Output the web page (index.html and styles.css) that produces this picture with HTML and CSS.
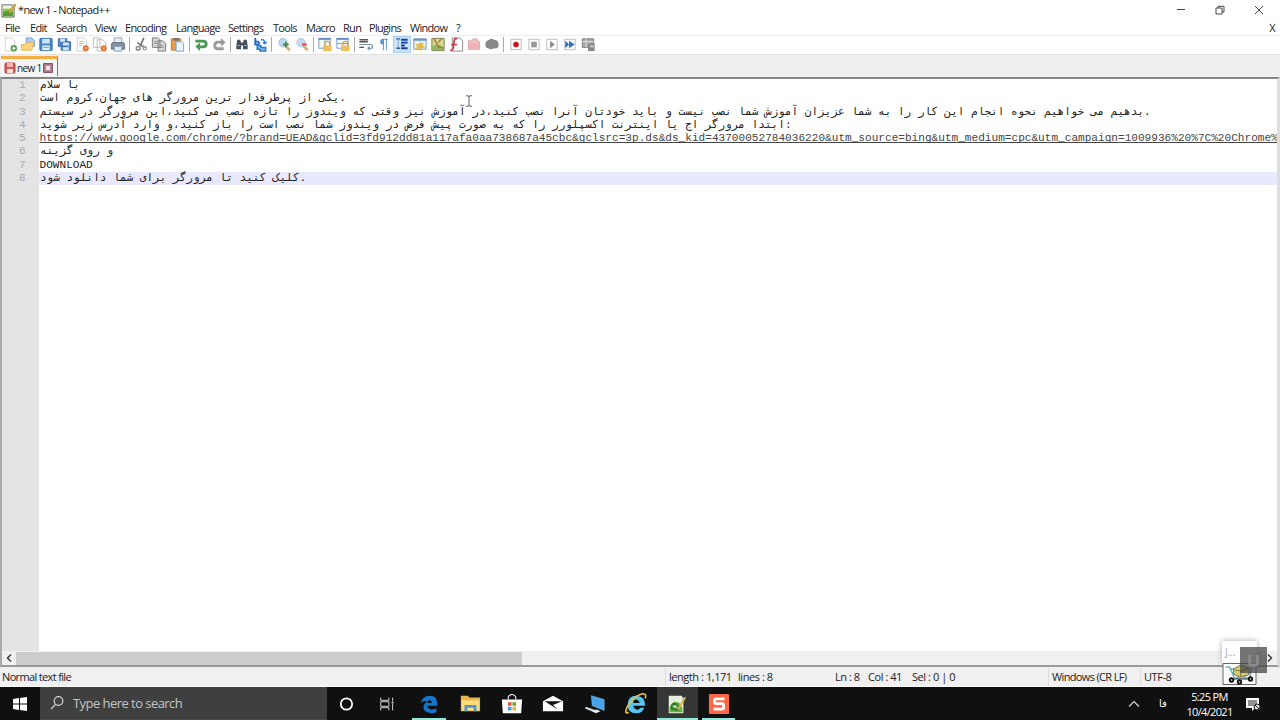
FILE: index.html
```html
<!DOCTYPE html>
<html lang="en">
<head>
<meta charset="utf-8">
<title>*new 1 - Notepad++</title>
<link rel="stylesheet" href="styles.css">
</head>
<body>
<div class="window">
  <header class="titlebar">
    <svg class="app-icon" viewBox="0 0 16 16"><path d="M1 2h11l2 2v11H1z" fill="#f3f5ee" stroke="#60655c"/><path d="M2 6h11v8H2z" fill="#8bcb3c"/><path d="M2 10q5-3 11 0v4H2z" fill="#4da432"/><path d="M8 10l6-9 2 1-6 9-2 1z" fill="#e8ba3b" stroke="#6a583a" stroke-width=".5"/></svg>
    <span class="title">*new 1 - Notepad++</span>
    <div class="controls">
      <svg viewBox="0 0 12 12"><path d="M2 5.500h8"/></svg>
      <svg viewBox="0 0 12 12"><path d="M2 4h6v6H2zM4 4V2.300h6V8H8"/></svg>
      <svg viewBox="0 0 12 12"><path d="M2 2l8 8M10 2l-8 8"/></svg>
    </div>
  </header>
  <nav class="menu">
    <span class="w25">File</span><span class="w26">Edit</span><span class="w39">Search</span><span class="w30">View</span><span class="w51">Encoding</span><span class="w52">Language</span><span class="w45">Settings</span><span class="w33">Tools</span><span class="w37">Macro</span><span class="w26">Run</span><span class="w41">Plugins</span><span class="w46">Window</span><span>?</span><span class="doc-close">X</span>
  </nav>
  <div class="toolbar">
    <svg viewBox="0 0 18 18"><path d="M4 2h7l3 3v11H4z" fill="#fff" stroke="#d0d0d0"/><circle cx="13" cy="13" r="3.400" fill="#4d9a45"/><path d="M13 11v4M11 13h4" stroke="#fff" stroke-width="1.200"/></svg>
    <svg viewBox="0 0 18 18"><path d="M7 2h6l3 3v6H7z" fill="#a9c9f0" stroke="#7da7dc"/><path d="M2 9h4l2-2h7l-2 8H2z" fill="#f9d57c" stroke="#e1b657"/></svg>
    <svg viewBox="0 0 18 18"><rect x="2.500" y="2.500" width="13" height="13" rx="1" fill="#4d85c4" stroke="#356fae"/><path d="M5 3h8v5H5z" fill="#c8e5f5"/><path d="M5 10h8v5H5z" fill="#d9eeee"/><path d="M6 12h6" stroke="#68a29e"/></svg>
    <svg viewBox="0 0 18 18"><path d="M3 3h9v8H3zM6 6h10v9H6z" fill="#5589ca" stroke="#3969ac"/><path d="M5 3h5v3H5zM8 7h6v3H8zM8 12h6v3H8z" fill="#d2e6f4"/></svg>
    <svg viewBox="0 0 18 18"><path d="M4 2h7l3 3v11H4z" fill="#fff" stroke="#ccc"/><path d="M6 6h5M6 8h5M6 10h3" stroke="#b9b9b9"/><circle cx="13" cy="13" r="3.200" fill="#df7436"/><path d="M12 12l2 2m0-2l-2 2" stroke="#f8d1af"/></svg>
    <svg viewBox="0 0 18 18"><path d="M2 2h7v10H2zM6 4h6l3 3v9H6z" fill="#fff" stroke="#bbb"/><circle cx="13" cy="13" r="3.200" fill="#df7436"/><path d="M12 12l2 2m0-2l-2 2" stroke="#f8d1af"/></svg>
    <svg viewBox="0 0 18 18"><path d="M5 2h8v6H5z" fill="#e3f0fc" stroke="#8ba1bd"/><path d="M3 7h12l1 2v5H2V9z" fill="#89919d" stroke="#67717e"/><path d="M5 11h8v5H5z" fill="#d9eafa" stroke="#829dba"/></svg>
    <i class="sep"></i>
    <svg viewBox="0 0 18 18"><path d="M12 2L8 11M5 7l8 5" fill="none" stroke="#777" stroke-width="1.800"/><circle cx="6" cy="13" r="2" fill="none" stroke="#888" stroke-width="1.600"/><circle cx="13" cy="13" r="1.700" fill="none" stroke="#999" stroke-width="1.500"/></svg>
    <svg viewBox="0 0 18 18"><path d="M2 2h6l2 2v8H2zM8 5h5l3 3v8H8z" fill="#d6d6d6" stroke="#777"/><path d="M4 6h3M4 8h3M10 10h3M10 12h4" stroke="#888"/></svg>
    <svg viewBox="0 0 18 18"><path d="M3 3h10v12H3z" fill="#e8a14b" stroke="#b77d37"/><path d="M5 2h6v3H5z" fill="#777"/><path d="M8 6h6l2 2v8H8z" fill="#edf5ff" stroke="#799fce"/></svg>
    <i class="sep"></i>
    <svg viewBox="0 0 18 18"><path d="M3 4h8q5 0 5 4.500T11 13H8v3l-5-5 5-4v3h3q2 0 2-1.500T11 7H3z" fill="#489b51"/></svg>
    <svg viewBox="0 0 18 18"><path d="M14 15H8q-5 0-5-5t5-5h3V2l5 5-5 4V8H8q-2 0-2 2t2 2h6z" fill="#9b9b9b"/></svg>
    <i class="sep"></i>
    <svg viewBox="0 0 18 18"><path d="M4 4h3l1 3h2l1-3h3l1 6v4h-5v-4H8v4H3v-4z" fill="#454e5d"/><path d="M4 10h3m4 0h3" stroke="#a2acbc"/></svg>
    <svg viewBox="0 0 18 18"><path d="M4 2v7h3q2-1 0-3H4" fill="none" stroke="#2768bc" stroke-width="2"/><path d="M10 4q4-1 4 4l-2-1m2 1l2-2" fill="none" stroke="#2879c4" stroke-width="1.500"/><path d="M6 10h4v2h5v4H9v-2H6z" fill="#73b3e9" stroke="#2879c4" stroke-width="1.500"/></svg>
    <i class="sep"></i>
    <svg viewBox="0 0 18 18"><path d="M10 10l5 5" stroke="#d5ad83" stroke-width="3"/><circle cx="8" cy="7" r="4.400" fill="#b9d9f5" stroke="#9ebad3"/><path d="M11 6v6M8 9h6" stroke="#478a43" stroke-width="2"/></svg>
    <svg viewBox="0 0 18 18"><path d="M10 10l5 5" stroke="#d5ad83" stroke-width="3"/><circle cx="8" cy="7" r="4.400" fill="#c6dcf4" stroke="#a8c4df"/><path d="M9 9h5" stroke="#d84a4a" stroke-width="2.200"/></svg>
    <i class="sep"></i>
    <svg viewBox="0 0 18 18"><path d="M2.500 3h12v10h-12zM9 3v10" fill="#f5fbff" stroke="#7498bf"/><path d="M2 3h13" stroke="#628dbd" stroke-width="2"/><path d="M9 10V7q3-3 5 0v3" fill="none" stroke="#d8a644" stroke-width="1.500"/><path d="M7 10h9v6H7z" fill="#ecc05d"/></svg>
    <svg viewBox="0 0 18 18"><path d="M2.500 3h12v10h-12zM3 8h12" fill="#f5fbff" stroke="#7498bf"/><path d="M2 3h13" stroke="#628dbd" stroke-width="2"/><path d="M9 10V7q3-3 5 0v3" fill="none" stroke="#d8a644" stroke-width="1.500"/><path d="M7 10h9v6H7z" fill="#ecc05d"/></svg>
    <i class="sep"></i>
    <svg viewBox="0 0 18 18"><path d="M2 4h9M2 6h9M2 12h5" stroke="#555" stroke-width="1.500"/><path d="M2 9h12q2 0 2 2t-2 2h-3m2-2l-2 2 2 2" fill="none" stroke="#7899b6" stroke-width="1.300"/></svg>
    <svg viewBox="0 0 18 18"><path d="M13 3H8Q5 3 5 6t3 3v6h1V4h2v11h1V4h1z" fill="#5795d2"/></svg>
    <svg class="active" viewBox="0 0 18 18"><path d="M3 3h4M3 13h4" stroke="#355fa9" stroke-width="1.500"/><path d="M5 4v9" stroke="#355fa9" stroke-dasharray="1 1"/><path d="M8 4h7M8 7h7M8 10h4M8 13h7" stroke="#173ca0" stroke-width="2"/></svg>
    <svg viewBox="0 0 18 18"><path d="M2.500 3h13v11h-13z" fill="#e7f3ff" stroke="#7596bd"/><path d="M2 4h14" stroke="#6794c5" stroke-width="2"/><path d="M9 5l1 3 3-1-1 3 3 2-4 1-1 3-2-3-4 1 2-3-2-3 4 1z" fill="#edb840"/></svg>
    <svg viewBox="0 0 18 18"><path d="M2.500 2.500h13v13h-13z" fill="#d2dd87" stroke="#777b59"/><path d="M3 11l5-3 7 4v3H3z" fill="#92b768"/><path d="M5 3l5 10M13 3L9 7m0 4l6 2" fill="none" stroke="#b97945" stroke-width="1.500"/></svg>
    <svg viewBox="0 0 18 18"><path d="M5 2h8l3 3v11H5z" fill="#fff" stroke="#888"/><path d="M10 3Q7 2 7 6l-1 7q-1 3-3 2M4 9h6" fill="none" stroke="#d33843" stroke-width="1.800"/></svg>
    <svg viewBox="0 0 18 18"><path d="M3 5h4l1-2h4l1 3h2v8H3z" fill="#f3c0c0" stroke="#dfa1a5"/><path d="M3 8h12v6H3z" fill="#efb1b5"/></svg>
    <svg viewBox="0 0 18 18"><path d="M2 9q0-4 4-5 2-2 5 0 5 0 5 5t-5 4q-3 2-6 0-3 0-3-4" fill="#888"/></svg>
    <i class="sep"></i>
    <svg viewBox="0 0 18 18"><path d="M3.500 3.500h11v11h-11z" fill="#fff" stroke="#b6b9bd"/><circle cx="9" cy="9" r="3" fill="#c91920"/></svg>
    <svg viewBox="0 0 18 18"><path d="M3.500 3.500h11v11h-11z" fill="#fff" stroke="#bbb"/><path d="M6 6h6v6H6z" fill="#999"/></svg>
    <svg viewBox="0 0 18 18"><path d="M3.500 3.500h11v11h-11z" fill="#fff" stroke="#bbb"/><path d="M7 5l5 4-5 4z" fill="#888"/></svg>
    <svg viewBox="0 0 18 18"><path d="M3.500 3.500h11v11h-11z" fill="#fff" stroke="#aebccd"/><path d="M4 5l4 4-4 4zM8 5l6 4-6 4z" fill="#326fbd"/></svg>
    <svg viewBox="0 0 18 18"><path d="M3 3h12v9H3z" fill="#aaa" stroke="#777"/><path d="M3 6h12M7 3v9" stroke="#e0e0e0"/><path d="M9 8h7v8H9z" fill="#888"/><path d="M11 10h4v2h-4z" fill="#ccc"/></svg>
  </div>
  <div class="tabs">
    <div class="tab">
      <svg viewBox="0 0 12 12"><rect x="1" y="1" width="10" height="10" rx="1" fill="#dc5552" stroke="#b7403f"/><path d="M3 1h6v4H3z" fill="#f1b5ae"/><path d="M3 7h6v4H3z" fill="#fae1d7"/></svg>
      <span>new 1</span>
      <svg viewBox="0 0 12 12"><path d="M1.500 1.500h9v9h-9z" fill="#b2768a" stroke="#83576d"/><path d="M4 4l4 4m0-4L4 8" stroke="#fff" stroke-width="1.700"/></svg>
    </div>
  </div>
  <main class="editor">
    <div class="code">
      <div class="line"><span class="num">1</span><span class="fa">با سلام</span></div>
      <div class="line"><span class="num">2</span><span class="fa">یکی از پرطرفدار ترین مرورگر های جهان،کروم است.</span></div>
      <div class="line"><span class="num">3</span><span class="fa">بدهیم می خواهیم نحوه انجام این کار را به شما عزیزان آموزش شما نصب نیست و باید خودتان آنرا نصب کنید،در آموزش نیز وقتی که ویندوز را تازه نصب می کنید،این مرورگر در سیستم.</span></div>
      <div class="line"><span class="num">4</span><span class="fa">ابتدا مرورگر اج یا اینترنت اکسپلورر را که به صورت پیش فرض در ویندوز شما نصب است را باز کنید،و وارد آدرس زیر شوید:</span></div>
      <div class="line"><span class="num">5</span><span class="url">https://www.google.com/chrome/?brand=UEAD&amp;gclid=3fd912dd81a117afa0aa738687a45cbc&amp;gclsrc=3p.ds&amp;ds_kid=43700052784036220&amp;utm_source=bing&amp;utm_medium=cpc&amp;utm_campaign=1009936%20%7C%20Chrome%</span></div>
      <div class="line"><span class="num">6</span><span class="fa">و روی گزینه</span></div>
      <div class="line"><span class="num">7</span><span class="latin">DOWNLOAD</span></div>
      <div class="line current"><span class="num">8</span><span class="fa">کلیک کنید تا مرورگر برای شما دانلود شود.</span></div>
    </div>
    <div class="hscroll">
      <svg viewBox="0 0 14 14"><path d="M9 3.500L5.500 7 9 10.500"/></svg>
      <div class="thumb"></div>
      <svg class="right" viewBox="0 0 14 14"><path d="M5 3.500L8.500 7 5 10.500"/></svg>
    </div>
    <svg class="ibeam" viewBox="0 0 8 12"><path d="M1 .8h2l1 .7 1-.7h2M4 1.500v9M1 11.200h2l1-.7 1 .7h2"/></svg>
  </main>
  <footer class="status">
    <span class="kind">Normal text file</span><span class="length">length : 1,171</span><span class="lines">lines : 8</span><span class="ln">Ln : 8</span><span class="col">Col : 41</span><span class="sel">Sel : 0 | 0</span><span class="eol">Windows (CR LF)</span><span class="enc">UTF-8</span>
  </footer>
  <div class="taskbar">
    <div class="start"><svg viewBox="0 0 14 14"><path d="M0 2l6-1v5.500H0zM7 .9L14 0v6.500H7zM0 7.500h6V13l-6-1zM7 7.500h7V14l-7-1z" fill="#fff"/></svg></div>
    <div class="search"><svg viewBox="0 0 16 16"><circle cx="9.500" cy="6" r="4.300"/><path d="M6.500 9.300L2 14"/></svg><span>Type here to search</span></div>
    <div class="apps">
      <div><svg viewBox="0 0 24 24"><circle cx="12.500" cy="12" r="6.200" fill="none" stroke="#fff" stroke-width="1.900"/></svg></div>
      <div><svg viewBox="0 0 24 24"><path d="M4 5v3h9V5M4 19v-3h9v3M4 9.500h9v5H4zM17 5v4m0 3v7" fill="none" stroke="#ddd"/><path d="M16 9.500h2v2h-2z" fill="#ddd"/></svg></div>
      <div class="open"><svg viewBox="0 0 24 24"><path d="M3 11Q5 3 13 3q8 0 8 9v2H10q1 4 5 4 3 0 5-1v4q-2 1-6 1-9-1-8-8 1-3 4-5-5-1-7 2m7 0h5q0-3-2-3-3 0-3 3" fill="#1675ce" fill-rule="evenodd"/></svg></div>
      <div><svg viewBox="0 0 24 24"><path d="M2 3h8l1 2h12v15H2z" fill="#e9b64e"/><path d="M3 8h19v11H3z" fill="#ffdc7c"/><path d="M6 20v-7h13v7h-3v-4H9v4z" fill="#4e99c9"/></svg></div>
      <div><svg viewBox="0 0 24 24"><path d="M8 7V4q4-5 8 0v3" fill="none" stroke="#ddd" stroke-width="1.300"/><path d="M1 7h22l-1 15H2z" fill="#fff"/><path d="M7.500 10h4v4h-4z" fill="#e45b3b"/><path d="M12.500 10h4v4h-4z" fill="#76a839"/><path d="M7.500 15h4v4h-4z" fill="#3b9cda"/><path d="M12.500 15h4v4h-4z" fill="#edb33a"/></svg></div>
      <div><svg viewBox="0 0 24 24"><path d="M1 9l11-6 11 6v11H1z" fill="#fff"/><path d="M3 9h19l-10 4 5 5z" fill="#111"/></svg></div>
      <div><svg viewBox="0 0 24 24"><path d="M8 3l14 4v12L9 14z" fill="#46a3e8" stroke="#8acbfb" stroke-width=".5"/><path d="M2 15l12 4-3 2-10-4z" fill="#c8d7e4"/><path d="M9 20l5-2 4 2-5 2z" fill="#eee"/></svg></div>
      <div><svg viewBox="0 0 24 24"><path d="M3 13q0-10 9-10 10 0 10 11H9q1 5 6 4l2-2h4q-2 6-9 6-9 0-9-9m6-2h7q-1-4-4-4t-3 4" fill="#59c6f2" fill-rule="evenodd"/><path d="M4 21Q-1 24 2 16 8 4 18 1q6-1 4 5" fill="none" stroke="#efc23c" stroke-width="1.700"/></svg></div>
      <div class="open focused"><svg viewBox="0 0 24 24"><path d="M3 3h14l2 3v16H3z" fill="#e6efdf"/><path d="M4 15q4-7 8-5 5 0 6 9v2H4z" fill="#64b52e"/><path d="M6 12q5-4 9 4l-2 4-8-2z" fill="#2e7939"/><path d="M7 14l4-1 2 4-5-1z" fill="#bddb87"/><path d="M13 16l7-12 2 1-7 12-3 2z" fill="#ddb24e"/></svg></div>
      <div class="open"><svg viewBox="0 0 24 24"><rect x="1" y="1" width="22" height="22" rx="1.500" fill="#ff6847"/><path d="M18 6.500H9Q7 6.500 7 8.500v1q0 2 2 2h6q2 0 2 2v2q0 2-2 2H6" fill="none" stroke="#fff" stroke-width="3"/></svg></div>
    </div>
    <div class="tray">
      <svg class="chev" viewBox="0 0 12 12"><path d="M1 8.500l5-5 5 5"/></svg>
      <span class="lang">فا</span>
      <div class="clock"><span>5:25 PM</span><span>10/4/2021</span></div>
      <svg class="notice" viewBox="0 0 16 16"><path d="M1 2h13v10h-4l-3 3v-3H1z" fill="#fff"/><path d="M3 5h9M3 7h9M3 9h6" stroke="#222"/><circle cx="12" cy="11" r="3" fill="#ddd" stroke="#222"/><path d="M10 9l4 4" stroke="#222"/></svg>
    </div>
  </div>
  <div class="widget">
    <div class="label">J...</div>
    <svg class="cart" viewBox="0 0 34 22"><path d="M.500.500h33v21H.500z" fill="#fff" stroke="#666"/><path d="M3 4h4l5 11h15l3-11M7 6h22M9 10h20M11 5l5 10M25 5l-3 10" fill="none" stroke="#64b2c3" stroke-width="1.500"/><path d="M11 6l7-4 9 3-1 7-9 2-6-3z" fill="#d9ca70" stroke="#80743d"/><path d="M12 7l7 1 7-3M19 8l-1 5" fill="none" stroke="#827844"/><path d="M9 16h17" stroke="#333"/><g fill="#aaa" stroke="#111" stroke-width="1.800"><circle cx="9" cy="17" r="1.800"/><circle cx="17" cy="19" r="1.800"/><circle cx="28" cy="16" r="1.800"/></g></svg>
    <svg class="overlay" viewBox="0 0 27 26"><path d="M0 0h27v26H0z" fill="#444" fill-opacity=".74"/><path d="M9.500 8v8q0 2 2 2h4q2 0 2-2V8" fill="none" stroke="#888" stroke-width="3"/></svg>
  </div>
</div>
</body>
</html>
```
FILE: styles.css
```css
* { box-sizing: border-box; }
body { margin: 0; width: 1280px; height: 720px; overflow: hidden; font: 11px/14px "Open Sans", "Noto Sans", sans-serif; color: #222; }
svg { display: block; flex: none; }
.window { position: relative; display: flex; flex-direction: column; height: 720px; background: #fff; }
.titlebar { height: 20px; display: flex; align-items: center; padding-left: 1px; }
.app-icon { width: 15px; height: 15px; }
.title { margin-left: 2px; font-size: 11px; letter-spacing: -.62px; }
.controls { margin-left: auto; display: flex; gap: 27px; padding-right: 15px; }
.controls svg { width: 12px; height: 12px; fill: none; stroke: #333; stroke-width: .9; }
.menu { height: 16px; display: flex; align-items: center; padding-left: 5px; border-bottom: 1px solid #ededed; font-size: 11px; letter-spacing: -.7px; white-space: nowrap; }
.w25 { width: 25px; } .w26 { width: 26px; } .w30 { width: 30px; } .w33 { width: 33px; } .w37 { width: 37px; } .w39 { width: 39px; } .w41 { width: 41px; } .w45 { width: 45px; } .w46 { width: 46px; } .w51 { width: 51px; } .w52 { width: 52px; }
.doc-close { margin-left: auto; padding-right: 5px; }
.toolbar { height: 19px; display: flex; align-items: center; padding: 0 0 1px 1px; border-bottom: 1px solid #e2e2e2; }
.toolbar svg { width: 18px; height: 17px; }
.toolbar .active { background: #cce5fb; box-shadow: inset 0 0 0 1px #a4cff3; }
.sep { width: 1px; height: 15px; margin: 0 2.2px; background: #aaa; }
.tabs { height: 22px; background: #efefef; padding: 1px 0 0 1px; }
.tab { width: 57px; height: 20px; display: flex; align-items: center; padding-left: 3px; border-top: 3px solid #f5ac43; border-right: 1px solid #777; background: #f5f5f5; font-size: 10px; letter-spacing: -.65px; white-space: nowrap; }
.tab svg { width: 12px; height: 12px; }
.tab span { width: 25px; margin-left: 1px; }
.editor { position: relative; height: 590px; display: flex; flex-direction: column; border: 2px solid #999; border-top-color: #858585; border-right: 3px solid #ddd; border-left-color: #aaa; }
.code { flex: 1; overflow: hidden; background: linear-gradient(90deg, #e4e4e4 37px, #fff 37px); font: 11.1px/13.28px "Liberation Mono", monospace; }
.line { display: flex; height: 13.28px; white-space: pre; padding-left: 17px; }
.num { width: 20px; flex: none; color: #aaa; }
.current { background: linear-gradient(90deg, transparent 37px, #e8e8ff 37px); }
.fa { font-family: "DejaVu Sans Mono", monospace; font-size: 11.06px; line-height: 12px; padding-left: 1px; }
.url { color: #444; text-decoration: underline; text-decoration-thickness: 1px; text-underline-offset: 1px; text-decoration-skip-ink: none; }
.url, .latin { padding-left: .5px; }
.hscroll { height: 14px; display: flex; align-items: center; background: #f0f0f0; }
.hscroll svg { width: 14px; height: 14px; fill: none; stroke: #333; stroke-width: 1.4; }
.thumb { width: 506px; height: 13px; background: #cdcdcd; }
.right { margin-left: auto; }
.ibeam { position: absolute; left: 463px; top: 16px; width: 8px; height: 12px; fill: none; stroke: #333; stroke-width: .8; }
.status { height: 20px; display: flex; align-items: center; background: #f0f0f0; padding-left: 2px; font-size: 11px; letter-spacing: -.45px; white-space: nowrap; border-bottom: 1px solid #fff; }
.status .kind { width: 663px; letter-spacing: -.65px; }
.status .length { width: 73px; height: 18px; padding: 2px 0 0 3px; border-left: 1px solid #ddd; }
.lines { width: 97px; } .ln { width: 33px; } .col { width: 44px; } .sel { width: 136px; }
.eol { width: 92px; height: 18px; padding: 2px 0 0 3px; border-left: 1px solid #ddd; letter-spacing: -.65px; }
.enc { height: 18px; padding: 2px 0 0 3px; border-left: 1px solid #ddd; }
.taskbar { height: 33px; display: flex; background: #101010; color: #fff; }
.start { width: 40px; display: grid; place-items: center; }
.start svg { width: 14px; height: 14px; }
.search { width: 287px; display: flex; align-items: center; gap: 8px; padding-left: 9px; background: #3f3f3f; border-bottom: 1px solid #35592c; color: #c4c4c4; font-size: 13px; letter-spacing: -.55px; }
.search svg { width: 16px; height: 16px; fill: none; stroke: #d6d6d6; stroke-width: 1.2; }
.apps { display: flex; margin-left: -1.5px; }
.apps div { position: relative; width: 41.4px; display: grid; place-items: center; }
.apps svg { width: 22px; height: 22px; }
.open::after { content: ""; position: absolute; bottom: 0; left: 4px; right: 4px; height: 2px; background: #94e8d9; }
.apps .focused { background: #363636; }
.focused::after { left: 0; right: 0; }
.tray { margin-left: auto; display: flex; align-items: center; padding-right: 19px; }
.chev { width: 12px; height: 12px; fill: none; stroke: #ddd; stroke-width: 1.1; }
.lang { width: 8px; margin-left: 15px; font: 10px/14px "DejaVu Sans", sans-serif; }
.clock { width: 62px; margin: 0 8px 0 8px; padding-left: 7px; text-align: center; display: flex; flex-direction: column; font-size: 11px; line-height: 15px; letter-spacing: -.65px; white-space: nowrap; }
.tray .chev { margin-right: 4px; }
.notice { width: 16px; height: 16px; }
.widget { position: absolute; left: 1222px; top: 641px; width: 46px; height: 44px; }
.label { width: 35px; height: 22px; padding: 4px 3px; background: #fff; color: #aaa; font-size: 10px; box-shadow: 0 0 6px #aaa; }
.cart { width: 35px; height: 22px; }
.overlay { position: absolute; left: 18px; top: 6px; width: 27px; height: 26px; }
```
